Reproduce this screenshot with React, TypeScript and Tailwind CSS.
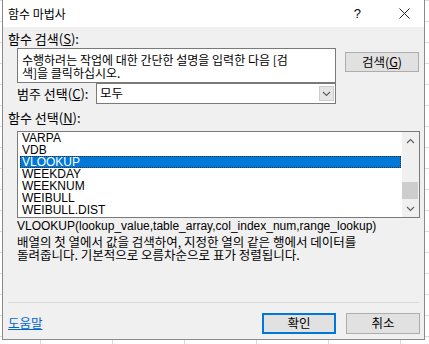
const ko = "font-['Noto_Sans_CJK_KR','Liberation_Sans',sans-serif]";
const lat = "font-['Liberation_Sans','Noto_Sans_CJK_KR',sans-serif]";

const funcs = ['VARPA', 'VDB', 'VLOOKUP', 'WEEKDAY', 'WEEKNUM', 'WEIBULL', 'WEIBULL.DIST'];

function Chevron({ up }: { up?: boolean }) {
  return (
    <svg width="9" height="6" viewBox="0 0 9 6" aria-hidden="true">
      <path d={up ? 'M1 5 L4.5 1.5 L8 5' : 'M1 1 L4.5 4.5 L8 1'} fill="none" stroke="#606060" strokeWidth="1.2" />
    </svg>
  );
}

export default function App() {
  return (
    <div className="w-[429px] h-[344px] overflow-hidden bg-white bg-[linear-gradient(to_right,#dadada_1px,transparent_1px),linear-gradient(to_bottom,#dadada_1px,transparent_1px)] bg-[size:72px_21px] bg-[position:40px_0]">
      <div className={`ml-[2px] w-[423px] h-[340px] flex flex-col border-x border-b border-[#8a8a8a] bg-[#f0f0f0] text-black ${ko}`}>
        {/* title bar */}
        <div className="h-[27px] bg-white flex items-center">
          <span className="pl-[5px] text-[12px] leading-none">함수 마법사</span>
          <span className={`ml-auto text-[13px] leading-none ${lat}`}>?</span>
          <svg className="ml-[38px] mr-[14px]" width="11" height="11" viewBox="0 0 11 11" aria-hidden="true">
            <path d="M0.5 0.5 L10.5 10.5 M10.5 0.5 L0.5 10.5" stroke="#222" strokeWidth="1" />
          </svg>
        </div>

        <div className="flex-1 flex flex-col">
          <div className="mt-[4px] pl-[5px] text-[13px] leading-[15px]">
            함수 검색(<span className="underline">S</span>):
          </div>

          <div className="mt-[2px] pl-[14px] flex items-start gap-[9px]">
            <div className="w-[319px] h-[35px] bg-white border border-[#7a7a7a] pl-[4px] pt-[4px] text-[12px] leading-[13px]">
              수행하려는 작업에 대한 간단한 설명을 입력한 다음 [검
              <br />
              색]을 클릭하십시오.
            </div>
            <div className="mt-[4px] w-[74px] h-[20px] bg-[#e1e1e1] border border-[#adadad] flex items-center justify-center text-[12.5px] leading-none">
              검색(<span className="underline">G</span>)
            </div>
          </div>

          <div className="pl-[14px] flex items-center">
            <span className="w-[79px] text-[13px] leading-none">
              범주 선택(<span className="underline">C</span>):
            </span>
            <div className="w-[240px] h-[21px] bg-white border border-[#7a7a7a] flex items-center">
              <span className="pl-[3px] text-[12.5px] leading-none">모두</span>
              <div className="ml-auto mr-[1px] w-[15px] h-[15px] bg-[#e5e5e5] border border-[#cccccc] flex items-center justify-center">
                <Chevron />
              </div>
            </div>
          </div>

          <div className="mt-[6px] pl-[5px] text-[13px] leading-[15px]">
            함수 선택(<span className="underline">N</span>):
          </div>

          <div className="mt-[6px] ml-[14px] w-[403px] h-[87px] bg-white border border-[#7a7a7a] flex">
            <ul className={`flex-1 pl-[2px] pr-[1px] text-[12px] leading-[12px] ${lat}`}>
              {funcs.map((f) => (
                <li
                  key={f}
                  className={
                    f === 'VLOOKUP'
                      ? 'h-[12px] pl-[2px] bg-[#0078d7] text-white outline-1 outline-dotted outline-[#333] -outline-offset-1'
                      : 'h-[12px] pl-[2px]'
                  }
                >
                  {f}
                </li>
              ))}
            </ul>
            <div className="w-[17px] flex flex-col items-center bg-[#f0f0f0]">
              <div className="h-[17px] flex items-center justify-center">
                <Chevron up />
              </div>
              <div className="flex-1 w-full relative">
                <div className="absolute left-0 right-[1px] top-[33px] h-[17px] bg-[#cdcdcd]" />
              </div>
              <div className="h-[17px] flex items-center justify-center">
                <Chevron />
              </div>
            </div>
          </div>

          <div className={`mt-[2px] pl-[14px] text-[12px] leading-[13px] ${lat}`}>
            VLOOKUP(lookup_value,table_array,col_index_num,range_lookup)
          </div>
          <div className="mt-[2px] pl-[14px] text-[12.5px] leading-[13px]">
            배열의 첫 열에서 값을 검색하여, 지정한 열의 같은 행에서 데이터를
            <br />
            돌려줍니다. 기본적으로 오름차순으로 표가 정렬됩니다.
          </div>

          <div className="mt-auto mx-[5px] h-px bg-[#d9d9d9]" />
          <div className="mt-[10px] mb-[5px] pl-[5px] pr-[4px] flex items-center">
            <a className="text-[12.5px] leading-none text-[#0066cc] underline" href="#">
              도움말
            </a>
            <div className="ml-auto w-[74px] h-[21px] bg-[#e1e1e1] border-2 border-[#0078d7] flex items-center justify-center text-[12.5px] leading-none">
              확인
            </div>
            <div className="ml-[10px] w-[74px] h-[21px] bg-[#e1e1e1] border border-[#adadad] flex items-center justify-center text-[12.5px] leading-none">
              취소
            </div>
          </div>
        </div>
      </div>
    </div>
  );
}
